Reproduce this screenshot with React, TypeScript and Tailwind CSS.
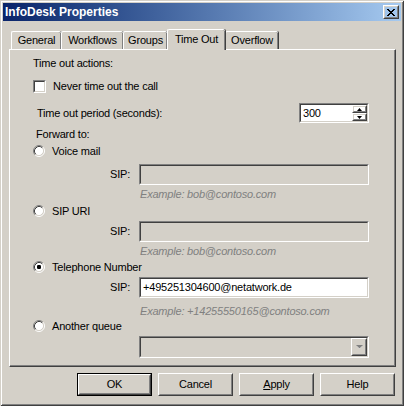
import type { ReactNode } from "react";

// sunken 3D frame used by edit boxes, spinner and checkbox
function Sunken({ className, inner, children }: { className: string; inner: string; children?: ReactNode }) {
  return (
    <div className={`flex border border-t-[#808080] border-l-[#808080] border-b-white border-r-white ${className}`}>
      <div className={`flex flex-1 items-center border border-t-[#404040] border-l-[#404040] border-b-[#d4d0c8] border-r-[#d4d0c8] ${inner}`}>
        {children}
      </div>
    </div>
  );
}

function Raised({ className, children }: { className: string; children?: ReactNode }) {
  return (
    <div className={`flex border border-t-white border-l-white border-b-[#404040] border-r-[#404040] ${className}`}>
      <div className="flex flex-1 items-center justify-center border border-t-[#d4d0c8] border-l-[#d4d0c8] border-b-[#808080] border-r-[#808080]">
        {children}
      </div>
    </div>
  );
}

function Radio({ checked }: { checked?: boolean }) {
  return (
    <svg width="12" height="12" viewBox="0 0 12 12" className="shrink-0">
      <circle cx="6" cy="6" r="4.5" fill="#fff" />
      <path d="M2.11 9.89 A5.5 5.5 0 0 1 9.89 2.11" fill="none" stroke="#808080" />
      <path d="M2.82 9.18 A4.5 4.5 0 0 1 9.18 2.82" fill="none" stroke="#404040" />
      <path d="M9.89 2.11 A5.5 5.5 0 0 1 2.11 9.89" fill="none" stroke="#fff" />
      <path d="M9.18 2.82 A4.5 4.5 0 0 1 2.82 9.18" fill="none" stroke="#d4d0c8" />
      {checked && <rect x="4" y="4" width="4" height="4" rx="1.2" fill="#000" />}
    </svg>
  );
}

function Tab({ label, w, active }: { label: string; w: string; active?: boolean }) {
  if (active) {
    return (
      <div className={`${w} relative z-10 -mb-[1px] flex h-[21px] items-start justify-center rounded-t-[2px] border-l border-t border-l-white border-t-white bg-[#d4d0c8] pt-[3px] shadow-[inset_-1px_0_0_#808080,1px_0_0_#404040]`}>
        {label}
      </div>
    );
  }
  return (
    <div className={`${w} flex h-[18px] items-start justify-center rounded-t-[2px] border-l border-t border-l-white border-t-white pt-[2px] shadow-[inset_-1px_0_0_#808080,1px_0_0_#404040]`}>
      {label}
    </div>
  );
}

function SipRow({ value, mt }: { value?: string; mt: string }) {
  return (
    <div className={`${mt} flex h-[21px] items-center`}>
      <span className="w-[120px] text-right">SIP:</span>
      <Sunken className="ml-[9px] h-[21px] w-[230px]" inner={value ? "bg-white pl-[2px]" : "bg-[#d4d0c8]"}>
        {value}
      </Sunken>
    </div>
  );
}

function Example({ text, mt }: { text: string; mt: string }) {
  return <div className={`${mt} ml-[130px] h-[13px] italic text-[#808080]`}>{text}</div>;
}

function RadioRow({ label, checked, mt }: { label: string; checked?: boolean; mt: string }) {
  return (
    <div className={`${mt} ml-[23px] flex h-[14px] items-center gap-[7px]`}>
      <Radio checked={checked} />
      <span>{label}</span>
    </div>
  );
}

export default function App() {
  return (
    <div className="flex h-[406px] w-[404px] flex-col bg-[#d4d0c8] p-[3px] font-['Liberation_Sans',Arial,sans-serif] text-[11px] leading-[13px] tracking-[-0.2px] text-black shadow-[inset_1px_1px_0_#d4d0c8,inset_-1px_-1px_0_#404040,inset_2px_2px_0_#fff,inset_-2px_-2px_0_#808080]">
      <div className="flex h-[18px] items-center justify-between bg-gradient-to-r from-[#0a246a] to-[#a6caf0] pl-[2px] pr-[2px]">
        <span className="text-[12px] font-bold tracking-normal text-white">InfoDesk Properties</span>
        <Raised className="h-[14px] w-[16px]">
          <svg width="8" height="7" viewBox="0 0 8 7">
            <path
              d="M0 0h2v1h1v1h2v-1h1v-1h2v1h-1v1h-1v1h-1v1h1v1h1v1h1v1h-2v-1h-1v-1h-2v1h-1v1h-2v-1h1v-1h1v-1h1v-1h-1v-1h-1v-1h-1z"
              fill="#000"
            />
          </svg>
        </Raised>
      </div>

      <div className="ml-[8px] mt-[8px] flex h-[20px] items-end">
        <Tab label="General" w="w-[50px]" />
        <Tab label="Workflows" w="w-[62px]" />
        <Tab label="Groups" w="w-[44px]" />
        <Tab label="Time Out" w="w-[58px]" active />
        <Tab label="Overflow" w="w-[53px]" />
      </div>

      <div className="ml-[6px] flex h-[318px] w-[387px] flex-col border border-b-[#404040] border-l-white border-r-[#404040] border-t-white pt-[7px] shadow-[inset_-1px_-1px_0_#808080]">
        <div className="ml-[23px] h-[13px]">Time out actions:</div>

        <div className="ml-[23px] mt-[10px] flex h-[13px] items-center gap-[7px]">
          <Sunken className="h-[13px] w-[13px]" inner="bg-white" />
          <span>Never time out the call</span>
        </div>

        <div className="mt-[10px] flex h-[20px] items-center justify-between pr-[26px]">
          <span className="ml-[27px]">Time out period (seconds):</span>
          <Sunken className="h-[20px] w-[70px]" inner="bg-white pl-[2px] justify-between">
            <span>300</span>
            <div className="flex flex-col">
              <Raised className="h-[8px] w-[15px]">
                <svg width="5" height="3" viewBox="0 0 5 3"><path d="M2.5 0L5 3H0z" fill="#000" /></svg>
              </Raised>
              <Raised className="h-[8px] w-[15px]">
                <svg width="5" height="3" viewBox="0 0 5 3"><path d="M0 0h5L2.5 3z" fill="#000" /></svg>
              </Raised>
            </div>
          </Sunken>
        </div>

        <div className="ml-[26px] mt-[5px] h-[13px]">Forward to:</div>

        <RadioRow label="Voice mail" mt="mt-[3px]" />
        <SipRow mt="mt-[6px]" />
        <Example text="Example: bob@contoso.com" mt="mt-[3px]" />

        <RadioRow label="SIP URI" mt="mt-[3px]" />
        <SipRow mt="mt-[3px]" />
        <Example text="Example: bob@contoso.com" mt="mt-[3px]" />

        <RadioRow label="Telephone Number" checked mt="mt-[2px]" />
        <SipRow value="+495251304600@netatwork.de" mt="mt-[3px]" />
        <Example text="Example: +14255550165@contoso.com" mt="mt-[7px]" />

        <RadioRow label="Another queue" mt="mt-[1px]" />
        <div className="ml-[129px] mt-[3px]">
          <Sunken className="h-[22px] w-[230px]" inner="bg-[#d4d0c8] justify-end">
            <Raised className="h-[18px] w-[16px]">
              <svg width="7" height="5" viewBox="0 0 7 5">
                <path d="M1 1h5L3.5 4z" fill="#fff" />
                <path d="M0 0h7L3.5 3.5z" fill="#808080" />
              </svg>
            </Raised>
          </Sunken>
        </div>
      </div>

      <div className="mt-[6px] flex justify-end gap-[6px] pr-[6px]">
        <div className="flex h-[23px] w-[75px] border border-black">
          <Raised className="flex-1">OK</Raised>
        </div>
        <Raised className="h-[23px] w-[75px]">Cancel</Raised>
        <Raised className="h-[23px] w-[75px]">
          <span>
            <span className="underline">A</span>pply
          </span>
        </Raised>
        <Raised className="h-[23px] w-[75px]">Help</Raised>
      </div>
    </div>
  );
}
